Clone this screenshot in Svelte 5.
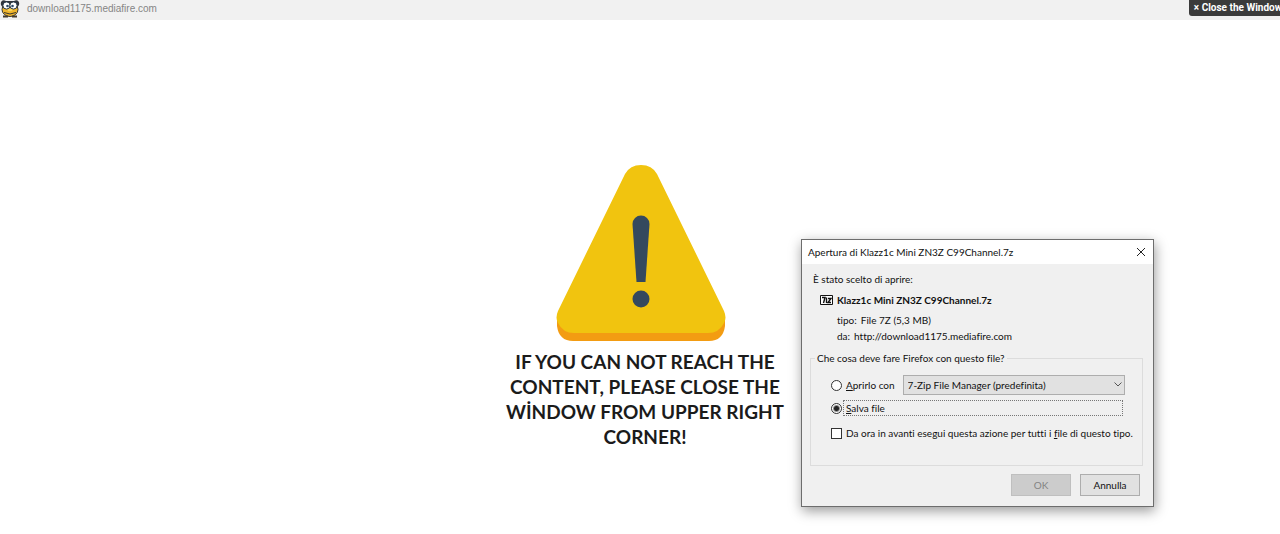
<script>
  let action = $state('save');
  let always = $state(false);
</script>

<header>
  <svg class="mascot" viewBox="0 0 20 18" aria-hidden="true">
    <path d="M1 5C0 1 3 -1 6 1H14C17 -1 20 1 19 5L17 8H3Z" fill="#30343c" />
    <ellipse cx="10" cy="9.500" rx="8" ry="7" fill="#eeb42b" stroke="#38352f" />
    <path d="M4 12.500Q10 15.500 16 12.500" fill="none" stroke="#39342c" />
    <circle cx="6.500" cy="5.500" r="3.600" fill="#fff" stroke="#27384b" />
    <circle cx="13.500" cy="5.500" r="3.600" fill="#fff" stroke="#27384b" />
    <circle cx="7.500" cy="6" r="1.300" fill="#294866" />
    <circle cx="12.500" cy="6" r="1.300" fill="#294866" />
    <ellipse cx="10" cy="10" rx="2.500" ry="1.300" fill="#f8d35c" />
    <path d="M3 16.500H8M12 16.500H17" stroke="#443b2c" stroke-width="2" />
  </svg>
  <span class="site">download1175.mediafire.com</span>
  <button class="close-window" type="button">× Close the Window</button>
</header>

<main>
  <section class="notice">
    <svg class="warning" viewBox="0 0 170 178" aria-hidden="true">
      <path d="M1 154V162Q3 177 17 177H153Q167 177 169 162V154Z" fill="#f39c12" />
      <path d="M69 10Q74 1 85 1T101 10L168 147Q171 154 168 159Q163 169 152 169H18Q7 169 2 159Q-1 154 2 147Z" fill="#f1c40f" />
      <path d="M76.500 60A8.500 8.500 0 0 1 93.500 60L89.500 118H80.500Z" fill="#34495e" />
      <circle cx="85" cy="135" r="8.500" fill="#34495e" />
    </svg>
    <h1>IF YOU CAN NOT REACH THE CONTENT, PLEASE CLOSE THE WİNDOW FROM UPPER RIGHT CORNER!</h1>
  </section>

  <div class="dialog" role="dialog" aria-labelledby="dialog-title">
    <div class="titlebar">
      <span id="dialog-title">Apertura di Klazz1c Mini ZN3Z C99Channel.7z</span>
      <button class="dismiss" type="button" aria-label="Chiudi">
        <svg viewBox="0 0 10 10"><path d="M1 1L9 9M9 1L1 9" fill="none" stroke="#222" /></svg>
      </button>
    </div>
    <div class="body">
      <p class="intro">È stato scelto di aprire:</p>
      <div class="file">
        <svg class="archive" viewBox="0 0 13 10" aria-hidden="true">
          <path d="M.5 .5H12.500V9.500H.5Z" fill="#fff" stroke="#111" />
          <path d="M2 2.500H5L3.500 8M6.500 2.500V8M8 3.500H11L8 7.500H11" fill="none" stroke="#111" stroke-width="1.400" />
        </svg>
        <strong>Klazz1c Mini ZN3Z C99Channel.7z</strong>
      </div>
      <p class="detail"><span>tipo:</span><span>File 7Z (5,3 MB)</span></p>
      <p class="detail"><span>da:</span><span>http://download1175.mediafire.com</span></p>

      <fieldset>
        <legend>Che cosa deve fare Firefox con questo file?</legend>
        <div class="option open">
          <input id="open" type="radio" name="action" value="open" bind:group={action} />
          <label for="open"><u>A</u>prirlo con</label>
          <div class="picker">
            <select aria-label="Applicazione">
              <option>7-Zip File Manager (predefinita)</option>
            </select>
            <svg viewBox="0 0 8 5" aria-hidden="true"><path d="M.5 .5L4 4L7.500 .5" fill="none" stroke="#555" /></svg>
          </div>
        </div>
        <div class="option save">
          <input id="save" type="radio" name="action" value="save" bind:group={action} />
          <label class="focused" for="save"><u>S</u>alva file</label>
        </div>
        <div class="option always">
          <input id="always" type="checkbox" bind:checked={always} />
          <label for="always">Da ora in avanti esegui questa azione per tutti i <u>f</u>ile di questo tipo.</label>
        </div>
      </fieldset>

      <div class="actions">
        <button type="button" disabled>OK</button>
        <button type="button">Annulla</button>
      </div>
    </div>
  </div>
</main>

<style>
  :global(body) { margin: 0; background: #fff; }
  header, main { box-sizing: border-box; }
  header {
    display: flex;
    align-items: flex-start;
    height: 20px;
    overflow: hidden;
    background: #f1f1f1;
    font-family: "Liberation Sans", Arial, sans-serif;
  }
  .mascot { width: 20px; height: 18px; flex: none; }
  .site { margin-left: 7px; color: #858585; font-size: 10px; line-height: 17px; }
  .close-window {
    flex: none;
    height: 16px;
    margin: 0 -7px 0 auto;
    padding: 0 5px;
    border: 0;
    border-radius: 0 0 0 3px;
    background: #3b3b3b;
    color: #fff;
    font: bold 10px/16px Roboto, "Liberation Sans", sans-serif;
    white-space: nowrap;
  }
  main { padding: 144px 0 80px; }
  .notice {
    display: flex;
    flex-direction: column;
    align-items: center;
    width: 284px;
    margin: 0 auto;
    padding-left: 10px;
  }
  .warning { width: 170px; height: 178px; margin-right: 8px; }
  h1 {
    margin: 7px 0 0;
    color: #1b1b1b;
    font: 700 19px/25px Lato, "Open Sans", sans-serif;
    text-align: center;
  }
  .dialog {
    position: absolute;
    top: 239px;
    left: 801px;
    box-sizing: border-box;
    width: 353px;
    border: 1px solid #6d6d6d;
    background: #f0f0f0;
    box-shadow: 1px 4px 12px #0006;
    color: #111;
    font: 10px/16px Lato, "Open Sans", sans-serif;
    font-variant-ligatures: none;
  }
  .titlebar {
    display: flex;
    align-items: center;
    justify-content: space-between;
    height: 24px;
    padding: 0 6px;
    background: #fff;
  }
  .dismiss { display: flex; padding: 1px; border: 0; background: none; }
  .dismiss svg { width: 10px; height: 10px; }
  .body { padding: 7px 10px 10px 8px; }
  p { margin: 0; }
  .intro { padding-left: 3px; }
  .file { display: flex; align-items: center; gap: 4px; margin: 5px 0 4px 10px; }
  .archive { width: 13px; height: 10px; }
  .detail { display: flex; gap: 4px; padding-left: 27px; }
  fieldset {
    box-sizing: border-box;
    min-width: 0;
    height: 116px;
    margin: 6px 0 8px;
    padding: 9px 19px 0 20px;
    border: 1px solid #dcdcdc;
  }
  legend { margin-left: -16px; padding: 0 2px; }
  .option { display: flex; align-items: center; gap: 4px; }
  .open { height: 20px; }
  .save { margin-top: 5px; }
  .always { margin-top: 9px; }
  input {
    appearance: none;
    flex: none;
    box-sizing: border-box;
    width: 11px;
    height: 11px;
    margin: 0;
    border: 1px solid #333;
    background: #fff;
  }
  input[type="radio"] { border-radius: 50%; }
  input[type="radio"]:checked { background: radial-gradient(circle, #222 0 2px, #fff 4px); }
  input[type="checkbox"]:checked { background: #333; }
  label { white-space: nowrap; }
  u { text-underline-offset: 1px; }
  .focused { flex: 1; box-sizing: border-box; height: 16px; margin-left: -3px; padding-left: 2px; border: 1px dotted #777; line-height: 14px; }
  .picker { position: relative; flex: 1; margin: 0 -2px 0 4px; }
  select {
    appearance: none;
    display: block;
    box-sizing: border-box;
    width: 100%;
    height: 20px;
    padding: 0 4px;
    border: 1px solid #adadad;
    border-radius: 0;
    background: #e1e1e1;
    color: #111;
    font: inherit;
  }
  .picker svg { position: absolute; top: 7px; right: 3px; width: 8px; height: 5px; pointer-events: none; }
  .actions { display: flex; justify-content: flex-end; gap: 9px; padding-right: 3px; }
  .actions button {
    box-sizing: border-box;
    width: 60px;
    height: 22px;
    padding: 0;
    border: 1px solid #adadad;
    background: #e1e1e1;
    color: #111;
    font: inherit;
  }
  .actions button:disabled { border-color: #bfbfbf; background: #ccc; color: #838383; }
</style>
